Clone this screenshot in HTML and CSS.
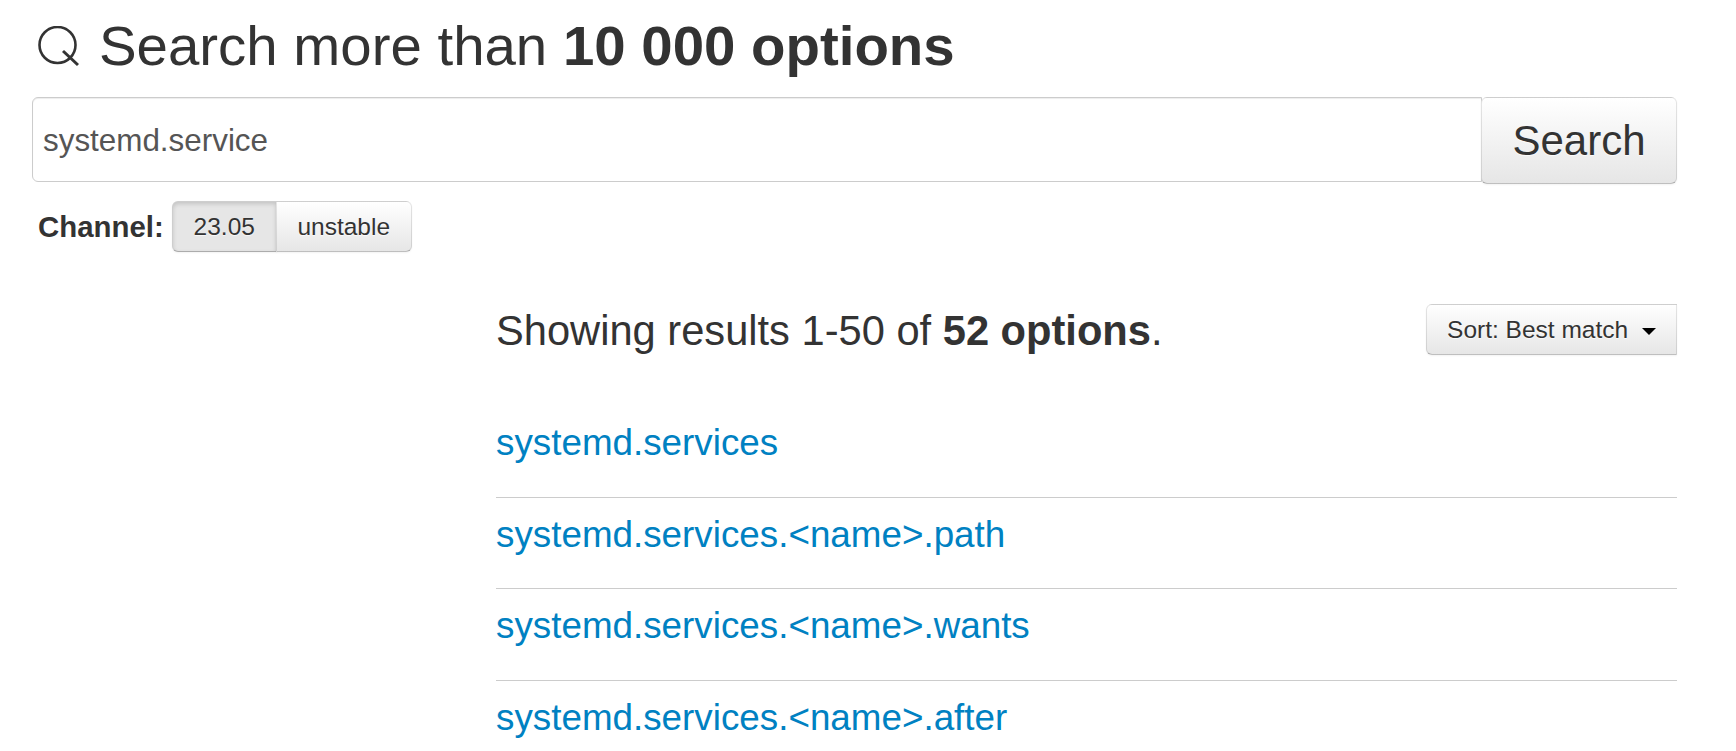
FILE: index.html
```html
<!DOCTYPE html>
<html lang="en">
<head>
  <meta charset="UTF-8" />
  <title>NixOS Search - Options</title>
  <link rel="stylesheet" href="styles.css">
</head>
<body>
  <div class="page">
    <h1 class="search-title">
      <svg class="search-icon" viewBox="0 0 44 44" width="44" height="44" aria-hidden="true">
        <circle cx="20.5" cy="19" r="18" fill="none" stroke="#333" stroke-width="2.6"/>
        <path d="M26 25 L 41 39" fill="none" stroke="#333" stroke-width="3"/>
      </svg>
      <span>Search more than <strong>10 000 options</strong></span>
    </h1>

    <form class="search-form">
      <input class="search-input" type="text" value="systemd.service">
      <button class="btn btn-search" type="button">Search</button>
    </form>

    <div class="channels">
      <strong class="channels-label">Channel:</strong>
      <div class="btn-group">
        <button class="btn btn-channel active" type="button">23.05</button>
        <button class="btn btn-channel" type="button">unstable</button>
      </div>
    </div>

    <div class="results">
      <div class="results-header">
        <h2 class="results-count">Showing results 1-50 of <strong>52 options</strong>.</h2>
        <button class="btn btn-sort" type="button">Sort: Best match <span class="caret"></span></button>
      </div>
      <ul class="results-list">
        <li><a href="#">systemd.services</a></li>
        <li><a href="#">systemd.services.&lt;name&gt;.path</a></li>
        <li><a href="#">systemd.services.&lt;name&gt;.wants</a></li>
        <li><a href="#">systemd.services.&lt;name&gt;.after</a></li>
      </ul>
    </div>
  </div>
</body>
</html>
```

FILE: styles.css
```css
* {
  margin: 0;
  padding: 0;
  box-sizing: border-box;
}
html, body {
  height: 100%;
  overflow: hidden;
}
body {
  background: #fff;
  color: #333;
  font-family: "Liberation Sans", Arial, sans-serif;
}
.page {
  padding: 0 59px 0 32px;
}
.search-title {
  display: flex;
  align-items: center;
  height: 92px;
  font-size: 56.4px;
  font-weight: 400;
  line-height: 92px;
}
.search-icon {
  margin: 4px 18px 0 5px;
  flex: none;
}
.search-form {
  display: flex;
  align-items: flex-start;
  margin: 5px 0 0 0;
}
.search-input {
  flex: 1;
  height: 85px;
  padding: 2px 10px 0;
  margin-right: -1px;
  border: 1px solid #ccc;
  border-radius: 6px 0 0 6px;
  font-family: inherit;
  font-size: 31.4px;
  color: #555;
  box-shadow: inset 0 1px 1px rgba(0, 0, 0, 0.075);
}
.btn {
  font-family: inherit;
  color: #333;
  text-shadow: 0 1px 1px rgba(255, 255, 255, 0.75);
  background: linear-gradient(to bottom, #fff, #e6e6e6);
  border: 1px solid rgba(0, 0, 0, 0.1);
  border-bottom-color: rgba(0, 0, 0, 0.25);
  box-shadow: inset 0 1px 0 rgba(255, 255, 255, 0.2), 0 1px 2px rgba(0, 0, 0, 0.05);
  cursor: pointer;
}
.btn-search {
  position: relative;
  width: 196px;
  height: 87px;
  font-size: 42px;
  border-radius: 6px;
}
.channels {
  display: flex;
  align-items: center;
  margin-top: 17px;
  margin-left: 6px;
}
.channels-label {
  font-size: 29.4px;
  margin-right: 8px;
}
.btn-group {
  display: flex;
}
.btn-channel {
  height: 51px;
  padding: 0 20px;
  font-size: 24.5px;
}
.btn-channel:first-child {
  border-radius: 6px 0 0 6px;
  width: 105px;
}
.btn-channel:last-child {
  border-radius: 0 6px 6px 0;
  margin-left: -1px;
  width: 136px;
}
.btn-channel.active {
  background: #e6e6e6;
  box-shadow: inset 0 2px 4px rgba(0, 0, 0, 0.15), 0 1px 2px rgba(0, 0, 0, 0.05);
}
.results {
  margin: 52px 0 0 464px;
}
.results-header {
  display: flex;
  justify-content: space-between;
  align-items: center;
  height: 51px;
}
.results-count {
  font-size: 41.65px;
  font-weight: 400;
  padding-top: 3px;
}
.btn-sort {
  width: 251px;
  height: 51px;
  font-size: 24.5px;
  border-radius: 6px 0 0 6px;
}
.caret {
  display: inline-block;
  margin-left: 7px;
  vertical-align: middle;
  border-top: 7px solid #000;
  border-left: 7px solid transparent;
  border-right: 7px solid transparent;
}
.results-list {
  list-style: none;
  margin-top: 51px;
}
.results-list li {
  height: 91.5px;
  padding-top: 17px;
  border-bottom: 1px solid #ccc;
  font-size: 36.8px;
  line-height: 40px;
}
.results-list a {
  color: #0081c2;
  text-decoration: none;
}
```
